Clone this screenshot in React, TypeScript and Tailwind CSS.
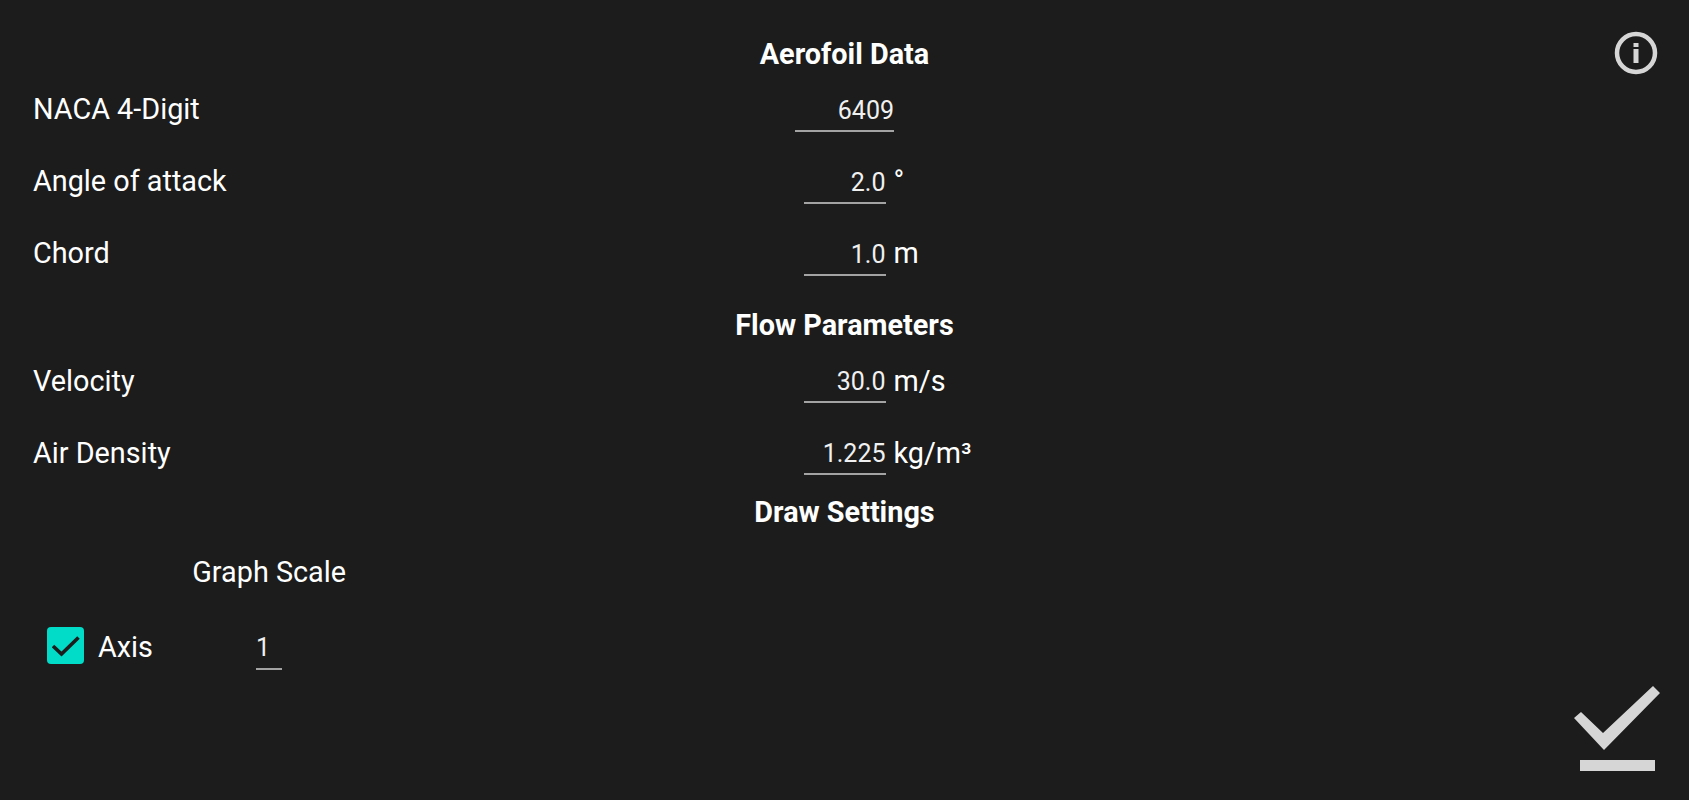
import { ReactNode } from "react";

const Heading = ({ children, className }: { children: ReactNode; className: string }) => (
  <h2 className={`text-center text-[28.8px] font-bold leading-8 text-white ${className}`}>{children}</h2>
);

interface FieldProps {
  label: string;
  value: string;
  unit?: string;
  wide?: boolean;
  low?: boolean;
}

const Field = ({ label, value, unit, wide, low }: FieldProps) => (
  <div className="grid h-[72px] grid-cols-[1fr_auto_1fr] items-start">
    <span className="pl-[33px] pt-[32px] text-[28.8px] leading-9 text-white">{label}</span>
    <div
      className={`h-[46px] border-b-2 border-[#a3a3a3] pt-[5px] text-right text-[25px] leading-10 text-[#f0f0f0] ${
        wide ? "w-[99px]" : "w-[82px]"
      } ${low ? "mt-[27px]" : "mt-[26px]"}`}
    >
      {value}
    </div>
    <span className="pl-2 pt-[32px] text-[28.8px] leading-9 text-white">{unit}</span>
  </div>
);

export default function App() {
  return (
    <div className="relative h-[800px] overflow-hidden bg-[#1c1c1c] font-['Roboto',sans-serif]">
      <Heading className="pt-[38px]">Aerofoil Data</Heading>
      <div className="mt-[-11px]">
        <Field label="NACA 4-Digit" value="6409" wide low />
        <Field label="Angle of attack" value="2.0" unit="°" low />
        <Field label="Chord" value="1.0" unit="m" low />
      </div>
      <Heading className="pt-[34px]">Flow Parameters</Heading>
      <div className="mt-[-10px]">
        <Field label="Velocity" value="30.0" unit="m/s" />
        <Field label="Air Density" value="1.225" unit="kg/m³" />
      </div>
      <Heading className="pt-[21px]">Draw Settings</Heading>

      <div className="mt-[26px] w-[346px] text-right text-[28.8px] leading-9 text-white">Graph Scale</div>
      <div className="mt-[37px] flex items-start pl-[47px]">
        <div className="flex h-[37px] w-[37px] items-center justify-center rounded-[4px] bg-[#00dcc8]">
          <svg width="28" height="22" viewBox="0 0 28 22" fill="none">
            <path d="M1 11 L9.5 19 L26.5 2.5" stroke="#1c1c1c" strokeWidth="3.6" />
          </svg>
        </div>
        <span className="ml-[14px] mt-[2px] text-[28.8px] leading-9 text-white">Axis</span>
        <div className="ml-[103px] h-[43px] w-[26px] border-b-2 border-[#a3a3a3] pt-px text-[25px] leading-10 text-[#f0f0f0]">
          1
        </div>
      </div>

      <button className="absolute right-[30px] top-[30px]">
        <svg width="46" height="46" viewBox="0 0 46 46" fill="none">
          <circle cx="23" cy="23" r="19" stroke="#d6d6d6" strokeWidth="4.5" />
          <rect x="20.5" y="19" width="5" height="14" fill="#d6d6d6" />
          <rect x="20.5" y="13" width="5" height="4" fill="#d6d6d6" />
        </svg>
      </button>
      <button className="absolute right-[26px] bottom-[28px]">
        <svg width="89" height="87" viewBox="0 0 89 87" fill="none">
          <path d="M0 33 L7 27 L29 48 L79 1 L86 8 L30 65 Z" fill="#d6d6d6" />
          <rect x="6" y="75" width="75" height="11" fill="#d6d6d6" />
        </svg>
      </button>
    </div>
  );
}
